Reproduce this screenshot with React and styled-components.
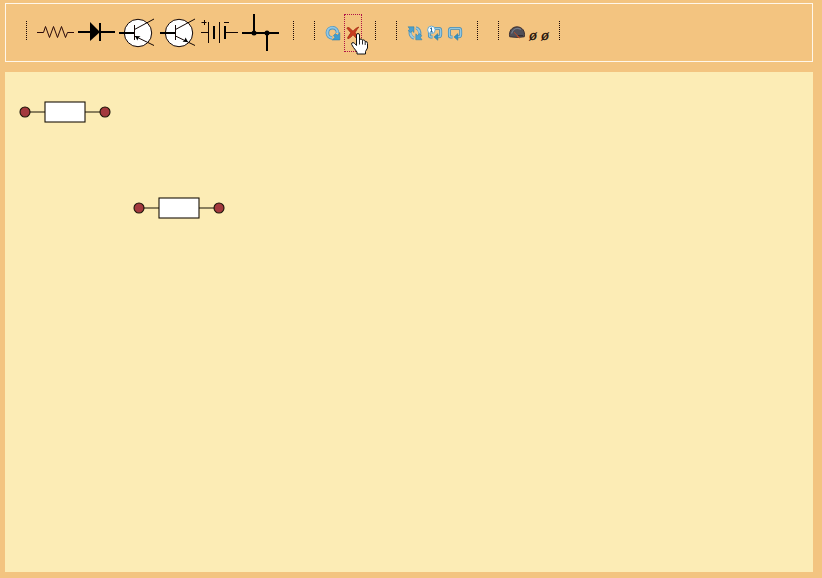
import React from "react";
import styled, { createGlobalStyle } from "styled-components";

const GlobalStyle = createGlobalStyle`
  * { box-sizing: border-box; }
  body { margin: 0; background: #f3c480; font-family: "Liberation Sans", sans-serif; }
`;

const Page = styled.div`
  display: flex;
  flex-direction: column;
  gap: 10px;
  height: 578px;
  padding: 3px 9px 6px 5px;
  background: #f3c480;
`;

const Toolbar = styled.header`
  display: flex;
  gap: 20px;
  flex: 0 0 59px;
  padding: 9px 20px 0;
  border: 1px solid #fff7ea;
`;

const Group = styled.div`
  display: flex;
  height: 39px;
`;

const Separator = styled.i`
  width: 1px;
  height: 19px;
  margin-top: 8px;
  background: repeating-linear-gradient(to bottom, #1c0806 0 1px, transparent 1px 2px);
`;

const Tools = styled.div`
  display: flex;
  gap: 2px;
  margin: 0 ${(p) => p.$end ?? 13}px 0 9px;
`;

const Tool = styled.button`
  position: relative;
  display: flex;
  align-items: center;
  justify-content: center;
  width: ${(p) => p.$width}px;
  height: 39px;
  padding: 0;
  border: 1px solid transparent;
  background: none;
`;

const SmallTool = styled(Tool)`
  height: 38px;
  margin-top: 1px;
  border: 1px dotted ${(p) => (p.$active ? "#b01048" : "transparent")};
`;

const Icon = styled.svg`
  display: block;
  flex: none;
  overflow: visible;
`;

const Empty = styled.span`
  font: italic 15px/16px "Liberation Serif", serif;
  color: #170b04;
  -webkit-text-stroke: 0.3px #170b04;
  padding-top: 3px;
`;

const Hand = styled.svg`
  position: absolute;
  z-index: 2;
  left: 6px;
  top: 18px;
  overflow: visible;
`;

const Canvas = styled.main`
  position: relative;
  flex: 1;
  background: #fcecb5;
`;

const Part = styled.svg`
  position: absolute;
  left: ${(p) => p.$x}px;
  top: ${(p) => p.$y}px;
`;

function Symbol({ children }) {
  return (
    <Icon width="37" height="37" viewBox="0 0 37 37" fill="none" stroke="#120502" strokeWidth="1">
      {children}
    </Icon>
  );
}

function Resistor() {
  return (
    <Symbol>
      <path stroke="#2a0a0a" d="M0 18.5H6.5L8.5 12.5L12.5 23.5L16.5 12.5L20.5 23.5L24.5 12.5L28.5 23.5L30.5 18.5H37" />
    </Symbol>
  );
}

function Diode() {
  return (
    <Symbol>
      <path stroke="#000" strokeWidth="2" d="M0 18H37M22 9V27" />
      <path fill="#000" stroke="none" d="M12 8L22 18L12 27Z" />
    </Symbol>
  );
}

function Transistor({ outward }) {
  return (
    <Symbol>
      <circle cx="19" cy="19" r="13.7" fill="#fff" />
      <path stroke="#000" strokeWidth="2" d="M0 19H15" />
      <path d="M15.5 11V26M15.5 15.5L35 5M15.5 22L35 31.5" />
      {outward ? (
        <path fill="#000" stroke="none" d="M28 28L22.5 27.8L24.5 26.2L25.6 23.5Z" />
      ) : (
        <path fill="#000" stroke="none" d="M16 22L21.5 22.3L19.4 23.8L18.4 26.5Z" />
      )}
    </Symbol>
  );
}

function Battery() {
  return (
    <Symbol>
      <path d="M0 18.5H7.5M7.5 8V29M18.5 8V29M25 18.5H37M.5 8.5H5.5M3.5 6V11M23 8.5H28" />
      <path stroke="#000" strokeWidth="2" d="M13 12V25M24 12V25" />
    </Symbol>
  );
}

function Junction() {
  return (
    <Symbol>
      <path stroke="#000" strokeWidth="2" d="M0 19H37M12 0V19M25 19V37" />
      <g fill="#000" stroke="none">
        <circle cx="12" cy="19" r="2.5" />
        <circle cx="25" cy="19" r="2.5" />
      </g>
    </Symbol>
  );
}

function Small({ children }) {
  return (
    <Icon width="16" height="16" viewBox="0 0 16 16" fill="none">
      {children}
    </Icon>
  );
}

function Rotate() {
  return (
    <Small>
      <path d="M7.2 13A5.1 5.1 0 1 1 12.6 8" stroke="#4a93c0" strokeWidth="3.6" />
      <path d="M7 12.8A5.1 5.1 0 1 1 12.5 8" stroke="#94c8e4" strokeWidth="2" />
      <path d="M14.8 7.6V15H7.2L10 12.3L8.4 10.6L10.6 8.6L12.2 10.2Z" fill="#3d9dd0" stroke="#2476a8" strokeWidth=".5" />
    </Small>
  );
}

function Remove() {
  return (
    <Small>
      <path d="M1.8 3.1Q2.6 2 4.2 2.8L8 6.2Q10.6 2.8 13.8 2Q11.6 4.6 10.2 7.6L13 12L11.2 13.2L8 9.8Q5.6 13.2 3 13.8Q2.2 13.4 2.8 12.2L5.8 7.8Z" fill="#c93c1f" stroke="#9c240f" strokeWidth=".7" />
    </Small>
  );
}

function Refresh() {
  return (
    <Small>
      <path d="M7 13.2Q2.6 11.5 3.2 6M9 2.8Q13.2 4 12.8 10" stroke="#5694b8" strokeWidth="3.2" />
      <path d="M6.8 13Q2.9 11 3.4 6M9.2 3Q13 4.5 12.5 10" stroke="#9ccbe0" strokeWidth="1.8" />
      <path d="M1 1.8H7V7.5L5.2 6L3.4 7.6L1.2 5.6L2.8 4ZM15 14.8H8.8V8.8L10.6 10.4L12.6 8.6L14.8 10.8L13.4 12.4Z" fill="#4ba2cf" stroke="#31799f" strokeWidth=".5" />
    </Small>
  );
}

function Loop({ once }) {
  return (
    <Small>
      <path d="M5.5 12H4Q2.4 12 2.4 10.2V5.4Q2.4 3.4 4.4 3.4H11.8Q13.7 3.4 13.7 5.4V9.6Q13.7 11.8 11.6 11.8H10" stroke="#468bb2" strokeWidth="2.9" />
      <path d="M5.5 12H4Q2.4 12 2.4 10.2V5.4Q2.4 3.4 4.4 3.4H11.8Q13.7 3.4 13.7 5.4V9.6Q13.7 11.8 11.6 11.8H10" stroke="#94c8e0" strokeWidth="1.4" />
      <path d="M7 12L10.8 8.6V15.3Z" fill="#2f92c5" stroke="#2b739c" strokeWidth=".5" />
      {once && (
        <>
          <circle cx="4.4" cy="4.9" r="3.8" fill="#f7fcff" stroke="#5ba3c9" strokeWidth=".9" />
          <path d="M3.1 3.6L4.5 2.8V7M3 7H6" stroke="#276c9d" strokeWidth="1" />
        </>
      )}
    </Small>
  );
}

function Gauge() {
  return (
    <Small>
      <path d="M.7 11.8C-.5 6 3 1.8 8 1.8S16.5 6 15.3 11.8Q8 13 .7 11.8Z" fill="#504e57" stroke="#332729" strokeWidth=".9" />
      <path d="M2.5 8.5C4 3.5 8 2 12 4.5" stroke="#737c8b" strokeWidth="1.2" />
      <path d="M5 7.3L10.6 12.8L7.8 11.2" stroke="#c04b24" />
      <path d="M9 10.5H14" stroke="#2e282d" strokeWidth=".8" />
    </Small>
  );
}

function HandPointer() {
  return (
    <Hand width="18" height="22" viewBox="0 0 18 22">
      <path
        d="M5.5 12.5V2Q5.5.5 7 .5T8.5 2V7Q8.5 6 10 6T11.5 7.5Q12 6.7 13 7T14.2 8.6Q16.5 8 16.5 10.5V15L14.5 18.5V21H6V19L2.5 14.5L.7 11.5Q.3 9.5 2 9.5Q3.5 9.7 5.5 12.5Z"
        fill="#fff" stroke="#111" strokeWidth="1" />
      <path d="M8.5 7V11.5M11.5 7.5V11.5M14.2 8.6V12" fill="none" stroke="#111" strokeWidth=".9" />
    </Hand>
  );
}

function CanvasResistor({ x, y }) {
  return (
    <Part $x={x} $y={y} width="92" height="24" viewBox="-6 -12 92 24" stroke="#191207" strokeWidth="1.1">
      <path d="M0 0H80" />
      <rect x="20" y="-10" width="40" height="20" fill="#fff" />
      <circle cx="0" cy="0" r="5" fill="#a3393e" />
      <circle cx="80" cy="0" r="5" fill="#a3393e" />
    </Part>
  );
}

function ToolGroup({ end, children }) {
  return (
    <Group>
      <Separator />
      <Tools $end={end}>{children}</Tools>
      <Separator />
    </Group>
  );
}

export default function App() {
  return (
    <>
      <GlobalStyle />
      <Page>
        <Toolbar>
          <ToolGroup>
            <Tool $width={39} aria-label="Resistor"><Resistor /></Tool>
            <Tool $width={39} aria-label="Diode"><Diode /></Tool>
            <Tool $width={39} aria-label="PNP transistor"><Transistor /></Tool>
            <Tool $width={39} aria-label="NPN transistor"><Transistor outward /></Tool>
            <Tool $width={39} aria-label="Battery"><Battery /></Tool>
            <Tool $width={39} aria-label="Junction"><Junction /></Tool>
          </ToolGroup>
          <ToolGroup>
            <SmallTool $width={18} aria-label="Rotate"><Rotate /></SmallTool>
            <SmallTool $width={18} $active aria-label="Delete"><Remove /><HandPointer /></SmallTool>
          </ToolGroup>
          <ToolGroup>
            <SmallTool $width={18} aria-label="Run"><Refresh /></SmallTool>
            <SmallTool $width={18} aria-label="Run once"><Loop once /></SmallTool>
            <SmallTool $width={18} aria-label="Repeat"><Loop /></SmallTool>
          </ToolGroup>
          <ToolGroup end={9}>
            <SmallTool $width={18} aria-label="Meter"><Gauge /></SmallTool>
            <SmallTool $width={10}><Empty>ø</Empty></SmallTool>
            <SmallTool $width={10}><Empty>ø</Empty></SmallTool>
          </ToolGroup>
        </Toolbar>
        <Canvas>
          <CanvasResistor x={14} y={28} />
          <CanvasResistor x={128} y={124} />
        </Canvas>
      </Page>
    </>
  );
}
